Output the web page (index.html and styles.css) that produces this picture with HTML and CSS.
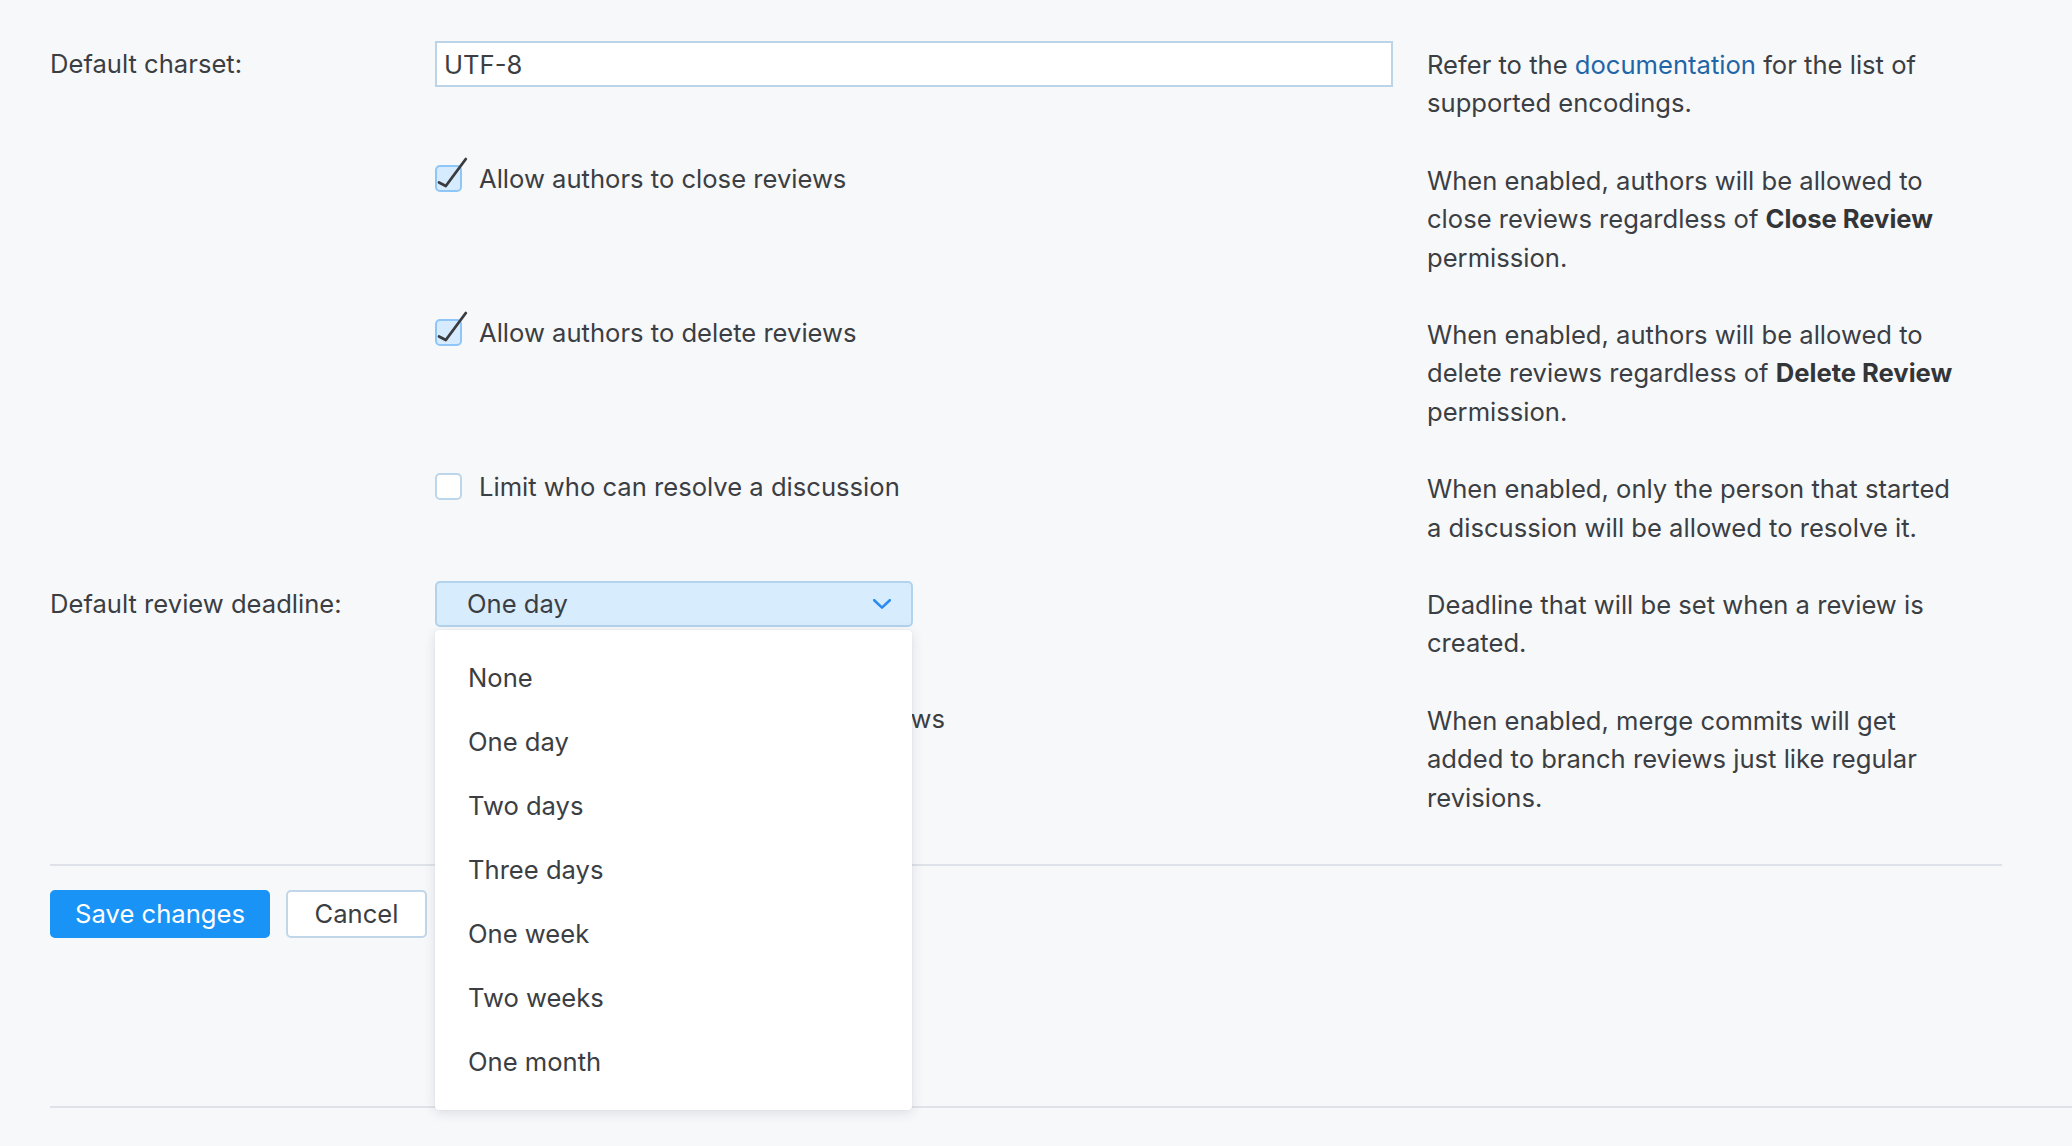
FILE: index.html
```html
<!DOCTYPE html>
<html lang="en">
<head>
<meta charset="utf-8">
<title>Review settings</title>
<link rel="stylesheet" href="styles.css">
</head>
<body>
<div class="page">
  <form class="settings">
    <div class="rows">
      <div class="row">
        <div class="label">Default charset:</div>
        <div class="control"><div class="text-input">UTF-8</div></div>
        <div class="help">Refer to the <a href="#">documentation</a> for the list of supported encodings.</div>
      </div>

      <div class="row">
        <div class="label"></div>
        <div class="control">
          <label class="check"><span class="cb on"><svg viewBox="0 0 36 36" width="36" height="36"><polyline points="4,25.5 10.8,29 30.8,2"/></svg></span>Allow authors to close reviews</label>
        </div>
        <div class="help">When enabled, authors will be allowed to close reviews regardless of <b>Close Review</b> permission.</div>
      </div>

      <div class="row">
        <div class="label"></div>
        <div class="control">
          <label class="check"><span class="cb on"><svg viewBox="0 0 36 36" width="36" height="36"><polyline points="4,25.5 10.8,29 30.8,2"/></svg></span>Allow authors to delete reviews</label>
        </div>
        <div class="help">When enabled, authors will be allowed to delete reviews regardless of <b>Delete Review</b> permission.</div>
      </div>

      <div class="row">
        <div class="label"></div>
        <div class="control">
          <label class="check"><span class="cb"></span>Limit who can resolve a discussion</label>
        </div>
        <div class="help">When enabled, only the person that started a discussion will be allowed to resolve it.</div>
      </div>

      <div class="row">
        <div class="label">Default review deadline:</div>
        <div class="control">
          <div class="select-wrap">
            <div class="select">
              <span>One day</span>
              <svg class="chev" viewBox="0 0 18 10" width="18" height="10"><polyline points="1.2,1.2 9,8.6 16.8,1.2"/></svg>
            </div>
            <ul class="menu">
              <li>None</li>
              <li>One day</li>
              <li>Two days</li>
              <li>Three days</li>
              <li>One week</li>
              <li>Two weeks</li>
              <li>One month</li>
            </ul>
          </div>
        </div>
        <div class="help">Deadline that will be set when a review is created.</div>
      </div>

      <div class="row">
        <div class="label"></div>
        <div class="control">
          <label class="check"><span class="cb"></span>Add merge commits to branch reviews</label>
        </div>
        <div class="help">When enabled, merge commits will get added to branch reviews just like regular revisions.</div>
      </div>
    </div>

    <div class="actions">
      <button type="button" class="btn primary">Save changes</button>
      <button type="button" class="btn secondary">Cancel</button>
    </div>
  </form>
  <div class="footer-line"></div>
</div>
</body>
</html>
```

FILE: styles.css
```css
html, body {
  margin: 0;
  padding: 0;
  background: #f7f8fa;
}

body {
  font-family: Inter, "Noto Sans", "Liberation Sans", sans-serif;
  font-size: 25.6px;
  line-height: 38.4px;
  color: #3b3e42;
  height: 1146px;
  overflow: hidden;
}

.page {
  padding: 41px 70px 0 50px;
}

.rows {
  display: flex;
  flex-direction: column;
  gap: 34px;
}

.row {
  display: grid;
  grid-template-columns: 385px 958px 1fr;
  align-items: start;
}

.label {
  padding-top: 3.5px;
}

.help {
  padding: 5px 40px 0 34px;
}

.help a {
  color: #1f66a8;
  text-decoration: none;
}

.help b {
  font-weight: 700;
  color: #333538;
}

.text-input {
  box-sizing: border-box;
  height: 46px;
  border: 2px solid #bad5ea;
  background: #ffffff;
  padding: 1px 7px 0;
  line-height: 41px;
}

.check {
  display: flex;
  align-items: center;
  gap: 17px;
  padding-top: 3px;
}

.cb {
  position: relative;
  box-sizing: border-box;
  width: 27px;
  height: 27px;
  margin-top: -1px;
  border: 2px solid #bcd6ec;
  border-radius: 5px;
  background: #ffffff;
  flex: none;
}

.cb.on {
  border-color: #8ec7f7;
  background: #d6ebfd;
}

.cb svg {
  position: absolute;
  left: -2px;
  top: -10px;
  overflow: visible;
}

.cb svg polyline {
  fill: none;
  stroke: #3a3c3f;
  stroke-width: 2.8;
  stroke-linecap: round;
  stroke-linejoin: round;
}

.select-wrap {
  position: relative;
  width: 478px;
}

.select {
  box-sizing: border-box;
  height: 46px;
  border: 2px solid #b2d3ee;
  border-radius: 5px;
  background: #d7ecfd;
  display: flex;
  align-items: center;
  justify-content: space-between;
  padding: 1px 20px 0 30px;
}

.chev {
  margin-top: -1px;
}

.chev polyline {
  fill: none;
  stroke: #2a8cf0;
  stroke-width: 2.6;
  stroke-linecap: round;
  stroke-linejoin: round;
}

.menu {
  position: absolute;
  top: 49px;
  left: 0;
  right: 1px;
  margin: 0;
  padding: 16px 0;
  list-style: none;
  background: #ffffff;
  border-radius: 4px;
  box-shadow: 0 3px 12px rgba(40, 50, 70, 0.13), 0 0 1px rgba(40, 50, 70, 0.12);
  z-index: 10;
}

.menu li {
  height: 64px;
  line-height: 64px;
  padding-left: 33px;
}

.actions {
  margin-top: 47px;
  border-top: 2px solid #dfe3e9;
  padding-top: 24px;
  display: flex;
  gap: 16px;
}

.btn {
  font-family: inherit;
  font-size: 25.6px;
  height: 47.5px;
  box-sizing: border-box;
  border-radius: 5px;
  border: 2px solid #c1d6e9;
  background: #ffffff;
  color: #3b3e42;
  padding: 1px 0 0;
  line-height: 40px;
  text-align: center;
  cursor: pointer;
}

.btn.primary {
  width: 220px;
  background: #1a93f6;
  border-color: #1a93f6;
  color: #ffffff;
}

.btn.secondary {
  width: 141px;
}

.footer-line {
  margin-top: 168px;
  margin-right: -70px;
  border-top: 2px solid #dfe3e9;
}
```
